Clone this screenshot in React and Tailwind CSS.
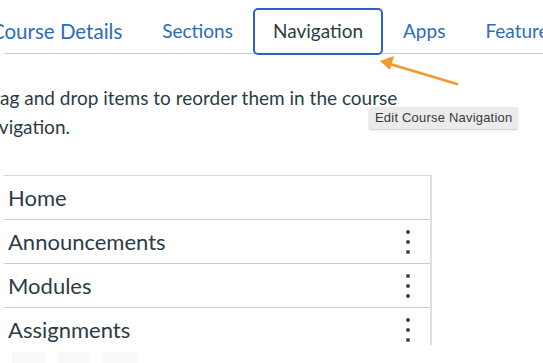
import React from "react";

const tabs = ["Course Details", "Sections", "Navigation", "Apps", "Feature Options"];
const rows = [
  { label: "Home", menu: false },
  { label: "Announcements", menu: true },
  { label: "Modules", menu: true },
  { label: "Assignments", menu: true },
];

function Kebab() {
  return (
    <div className="flex flex-col items-center gap-[6px] pr-[20px]">
      <span className="block w-[4px] h-[4px] rounded-full bg-[#3b4750]" />
      <span className="block w-[4px] h-[4px] rounded-full bg-[#3b4750]" />
      <span className="block w-[4px] h-[4px] rounded-full bg-[#3b4750]" />
    </div>
  );
}

export default function App() {
  return (
    <div
      className="relative w-[543px] h-[363px] overflow-hidden bg-white text-[#2d3b45]"
      style={{ fontFamily: "Lato, 'Noto Sans', sans-serif" }}
    >
      {/* Tabs */}
      <div className="pt-[8px] ml-[4px] border-b border-[#c7cdd1] h-[54px]">
        <div className="flex items-start ml-[-33px] whitespace-nowrap">
          {tabs.map((t, i) => {
            const active = t === "Navigation";
            return (
              <div
                key={t}
                className={
                  "h-[47px] flex items-center px-[18px] border-2 rounded-[5px] " +
                  (i === 0 ? "text-[20.5px] " : "text-[19px] ") +
                  (active
                    ? "border-[#2b62c6] text-[#2d3b45]"
                    : "border-transparent text-[#2d6db5]")
                }
              >
                {t}
              </div>
            );
          })}
        </div>
      </div>

      {/* Description */}
      <p className="ml-[-21px] w-[440px] mt-[29px] text-[19px] leading-[29px]">
        Drag and drop items to reorder them in the course navigation.
      </p>

      {/* Nav list */}
      <div className="ml-[4px] mt-[34px] w-[428px] h-[170px] overflow-hidden border-t border-[#d5d9dc] border-r-2 border-r-[#dcdee1]">
        {rows.map((r) => (
          <div
            key={r.label}
            className="h-[44px] flex items-center justify-between border-b border-[#c7cdd1] pl-[4px] text-[22px]"
          >
            <span>{r.label}</span>
            {r.menu && <Kebab />}
          </div>
        ))}
      </div>

      {/* Faded row below */}
      <div className="flex gap-[12px] ml-[12px] mt-[7px]">
        <span className="block w-[33px] h-[11px] bg-[#f8f9fa]" />
        <span className="block w-[33px] h-[11px] bg-[#f8f9fa]" />
        <span className="block w-[35px] h-[11px] bg-[#f8f9fa]" />
      </div>

      {/* Arrow annotation */}
      <svg
        className="absolute left-0 top-0 pointer-events-none"
        width="543"
        height="363"
        viewBox="0 0 543 363"
      >
        <line x1="457" y1="84" x2="390" y2="64" stroke="#f39a2e" strokeWidth="2.8" strokeLinecap="round" />
        <polygon points="380,61 394,56 390,70" fill="#f39a2e" />
      </svg>

      {/* Tooltip */}
      <div
        className="absolute left-[369px] top-[107px] h-[22px] px-[6px] flex items-center rounded-[3px] bg-[#ebebeb] shadow-[0_1px_2px_rgba(0,0,0,0.22)] text-[13px] text-[#3a3a3a] tracking-[0.2px]"
        style={{ fontFamily: "'Liberation Sans', Arial, sans-serif" }}
      >
        Edit Course Navigation
      </div>
    </div>
  );
}
